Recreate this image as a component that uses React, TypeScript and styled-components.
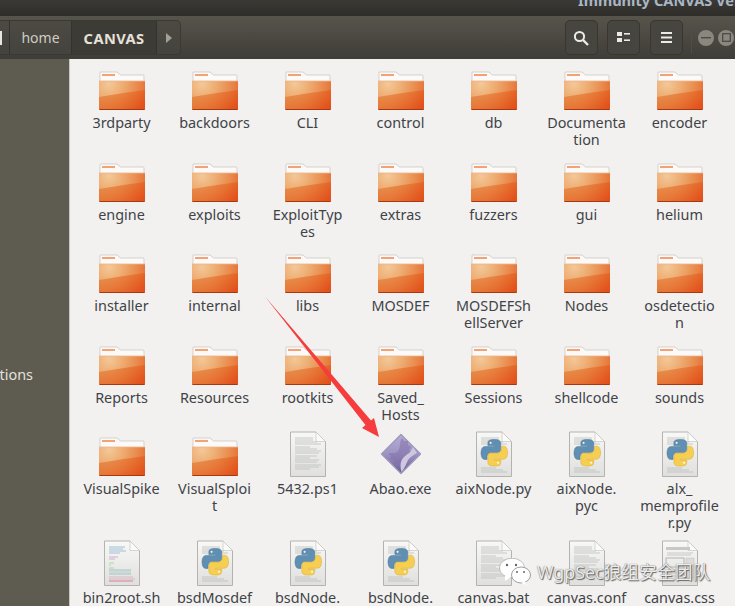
import React from "react";
import styled, { createGlobalStyle } from "styled-components";

const Global = createGlobalStyle`
  html, body { margin: 0; padding: 0; background: #f2f1ef; }
  body { font-family: "Noto Sans", "Noto Sans CJK SC", sans-serif; }
`;

const Window = styled.div`
  position: relative;
  width: 735px;
  height: 606px;
  overflow: hidden;
  display: flex;
  flex-direction: column;
`;

const TitleBar = styled.div`
  flex: none;
  height: 16px;
  background: linear-gradient(#3a3934, #2e2d29);
  display: flex;
  align-items: flex-end;
  padding: 0 0 7px 578px;
  box-sizing: border-box;
  overflow: hidden;
`;

const TitleText = styled.span`
  font-size: 14.6px;
  line-height: 17px;
  font-weight: 700;
  color: #a9b6c6;
  white-space: nowrap;
`;

const Toolbar = styled.div`
  flex: none;
  height: 43px;
  box-sizing: border-box;
  padding: 4px 0;
  background: linear-gradient(#57544c, #3f3d38);
  display: flex;
  align-items: stretch;
`;

const Crumbs = styled.div`
  display: flex;
  height: 35px;
  border: 1px solid #3b3934;
  border-left: none;
  border-radius: 0 5px 5px 0;
  background: linear-gradient(#4c4a43, #45433d);
  box-sizing: border-box;
`;

const Crumb = styled.div<{ $active?: boolean; $w: number; $edge?: boolean }>`
  width: ${(p) => p.$w}px;
  box-sizing: border-box;
  display: flex;
  align-items: center;
  justify-content: ${(p) => (p.$edge ? "flex-start" : "center")};
  font-size: ${(p) => (p.$active ? "14.6px" : "14px")};
  color: ${(p) => (p.$active ? "#e6e2d8" : "#cfccc3")};
  font-weight: ${(p) => (p.$active ? 700 : 400)};
  background: ${(p) => (p.$active ? "#3d3b36" : "transparent")};
  border-right: 1px solid #34322e;
  letter-spacing: ${(p) => (p.$active ? "0.4px" : "0")};
  &:last-child { border-right: none; }
`;

const Spacer = styled.div`
  flex: 1;
`;

const ToolButton = styled.div`
  width: 33px;
  height: 35px;
  box-sizing: border-box;
  margin-right: 9.5px;
  border: 1px solid #38362f;
  border-radius: 5px;
  background: #47453f;
  display: flex;
  align-items: center;
  justify-content: center;
`;

const Separator = styled.div`
  width: 1px;
  margin: 3px 6px 2px -1px;
  background: #4f4d46;
`;

const WinButtons = styled.div`
  display: flex;
  align-items: center;
  gap: 4px;
  width: 37px;
  overflow: hidden;
  flex: none;
`;

const WinButton = styled.div`
  flex: none;
  width: 16px;
  height: 16px;
  border-radius: 50%;
  background: #8a877f;
  display: flex;
  align-items: center;
  justify-content: center;
  svg { display: block; }
`;

const Body = styled.div`
  flex: 1;
  min-height: 0;
  display: flex;
`;

const Sidebar = styled.div`
  flex: none;
  width: 70px;
  box-sizing: border-box;
  background: #5e5b50;
  border-right: 1px solid #c9c7c0;
  padding-top: 307px;
`;

const SideItem = styled.div`
  width: 33px;
  display: flex;
  justify-content: flex-end;
  overflow: hidden;
  font-size: 14.4px;
  line-height: 18px;
  color: #e4e2da;
  white-space: nowrap;
`;

const Grid = styled.div`
  flex: 1;
  min-width: 0;
  background: #f2f1ef;
  box-sizing: border-box;
  padding: 5px 0 0 5px;
  display: grid;
  grid-template-columns: repeat(7, 93px);
  align-content: start;
`;

const Cell = styled.div`
  display: flex;
  flex-direction: column;
  align-items: center;
  padding-bottom: 7.1px;
`;

const IconBox = styled.div`
  width: 48px;
  height: 48px;
  flex: none;
  svg { display: block; }
`;

const Label = styled.div`
  margin-top: 2px;
  font-size: 14.4px;
  line-height: 17.2px;
  color: #3f4348;
  text-align: center;
  white-space: pre;
`;

const ArrowLayer = styled.svg`
  position: absolute;
  inset: 0;
  pointer-events: none;
`;

const Watermark = styled.div`
  position: absolute;
  left: 499px;
  top: 558px;
  display: flex;
  align-items: center;
  gap: 6px;
`;

const WatermarkText = styled.span`
  font-family: "Noto Sans", "Noto Sans CJK SC", sans-serif;
  font-size: 17.8px;
  line-height: 28px;
  color: rgba(255, 255, 255, 0.88);
  text-shadow: 0 0 1px #555, 1px 1px 1px rgba(60, 60, 60, 0.75);
  white-space: nowrap;
`;

const FolderIcon = () => (
  <svg width="48" height="48" viewBox="0 0 48 48">
    <defs>
      <radialGradient id="fb" gradientUnits="userSpaceOnUse" cx="11" cy="20" r="44">
        <stop offset="0" stopColor="#f3c898" />
        <stop offset="0.3" stopColor="#eeae74" />
        <stop offset="0.65" stopColor="#e98a4c" />
        <stop offset="1" stopColor="#e4602a" />
      </radialGradient>
      <linearGradient id="fs" x1="0" y1="0" x2="1" y2="0.7">
        <stop offset="0" stopColor="#e07a34" />
        <stop offset="0.55" stopColor="#e4621f" />
        <stop offset="1" stopColor="#e0430e" />
      </linearGradient>
    </defs>
    <path d="M2 8.5 Q2 8 2.5 8 H19 L22.5 11 H45.2 Q46 11 46 12 V18 H2 Z" fill="#fbfaf8" stroke="#c4c1bc" strokeWidth="0.7" />
    <rect x="4" y="10" width="13" height="2" fill="#f2a274" />
    <path d="M1 17 H47 V44.5 Q47 46 45.5 46 H2.5 Q1 46 1 44.5 Z" fill="url(#fb)" />
    <path d="M1 33 Q24 29 47 26 V44.5 Q47 46 45.5 46 H2.5 Q1 46 1 44.5 Z" fill="url(#fs)" opacity="0.6" />
    <path d="M1 17 H47" stroke="#f0b48c" strokeWidth="0.8" />
    <path d="M1.5 45.5 H46.5" stroke="#a8380f" strokeWidth="1" />
  </svg>
);

const Paper = ({ children }: { children?: React.ReactNode }) => (
  <svg width="48" height="48" viewBox="0 0 48 48">
    <defs>
      <linearGradient id="pp" x1="0" y1="0" x2="0" y2="1">
        <stop offset="0" stopColor="#f8f8f7" />
        <stop offset="1" stopColor="#dfdfdd" />
      </linearGradient>
    </defs>
    <path d="M6.5 2 H32 L41.5 11.5 V46.5 H6.5 Z" fill="url(#pp)" stroke="#b4b3b0" strokeWidth="1" />
    <path d="M32 2 V11.5 H41.5 Z" fill="#fbfbfa" stroke="#c6c5c2" strokeWidth="0.7" />
    {children}
  </svg>
);

const TextLines = ({ ys }: { ys: number[] }) => (
  <g stroke="#b7b7b4" strokeWidth="0.7">
    {ys.map((y, i) => (
      <line key={y} x1="11" y1={y} x2={i % 5 === 4 ? 26 : y < 11 ? 29 : 37 - (i % 3) * 2} y2={y} />
    ))}
  </g>
);

const DOC_LINES = [8, 10, 12, 14, 17, 19, 21, 23, 26, 28, 30, 32, 35, 37, 39];

const DocIcon = () => (
  <Paper>
    <TextLines ys={DOC_LINES} />
  </Paper>
);

const SNAKE =
  "M54.92 0C50.33 .03 45.95 .42 42.1 1.1 30.76 3.1 28.7 7.3 28.7 15.03V25.25H55.5V28.66H18.64C10.85 28.66 4.03 33.34 1.9 42.24-.56 52.44-.67 58.8 1.9 69.45 3.8 77.38 8.35 83.03 16.14 83.03H25.35V70.79C25.35 61.95 33 54.15 42.1 54.15H68.9C76.36 54.15 82.3 48 82.3 40.5V15.03C82.3 7.77 76.2 2.32 68.9 1.1 64.28 .33 59.5-.01 54.92 0Z";

const PythonIcon = () => (
  <Paper>
    <TextLines ys={[8, 10, 12, 14, 38, 40, 42]} />
    <g transform="translate(11 9.5) scale(0.24)">
      <path d={SNAKE} fill="#5f8fb3" stroke="#456f90" strokeWidth="2" />
      <circle cx="40" cy="14" r="4.5" fill="#eef3f6" />
      <g transform="rotate(180 55.4 55.4)">
        <path d={SNAKE} fill="#f6cf52" stroke="#d8a72e" strokeWidth="2" />
        <circle cx="40" cy="14" r="4.5" fill="#fff8dc" />
      </g>
    </g>
  </Paper>
);

const CODE_ROWS: [number, string, number][] = [
  [8, "#7fa9c9", 16], [10, "#7fa9c9", 14], [12, "#7fa9c9", 17], [14, "#7fa9c9", 11],
  [18, "#c58fc4", 9], [20, "#c58fc4", 6], [24, "#8fce8a", 5], [26, "#8fce8a", 2],
  [29, "#8fce8a", 5], [31, "#7fa9c9", 22], [33, "#8fce8a", 22], [35, "#7fa9c9", 22],
  [38, "#d7a8b2", 24], [40, "#d7a8b2", 26], [42, "#d2587a", 24],
];

const ScriptIcon = () => (
  <Paper>
    <g strokeWidth="0.7">
      {CODE_ROWS.map(([y, c, w]) => (
        <line key={y} x1="11" y1={y} x2={11 + w} y2={y} stroke={c} />
      ))}
    </g>
  </Paper>
);

const CssIcon = () => (
  <Paper>
    <rect x="10" y="8" width="24" height="3" fill="#c9c8c5" />
    <TextLines ys={[14, 16, 31, 34, 37, 40]} />
    <rect x="10" y="19" width="18" height="9" fill="none" stroke="#b5b4b1" />
    <rect x="30" y="19" width="8" height="20" fill="#dcdbd8" stroke="#c0bfbc" strokeWidth="0.5" />
  </Paper>
);

const ExeIcon = () => (
  <svg width="48" height="48" viewBox="0 0 48 48">
    <defs>
      <linearGradient id="dm" x1="0.5" y1="0" x2="0.5" y2="1">
        <stop offset="0" stopColor="#b5aed4" />
        <stop offset="0.5" stopColor="#9f94c4" />
        <stop offset="1" stopColor="#6c5a92" />
      </linearGradient>
    </defs>
    <path d="M24 4.5 L43.5 24 L24 43.5 L4.5 24 Z" fill="url(#dm)" stroke="#9d97ba" strokeWidth="1.3" strokeLinejoin="round" />
    <path d="M25 8 L27 11 L31 11 L31 15 L34 17 L32 20 L34 23 L31 25 L30 29 L27 32 L25 35 L21 33 L18 34 L17 30 L13 29 L14 26 L11 24 C15 22 19 24 21 21 C24 18 22 12 25 8 Z" fill="#7d6ba5" opacity="0.5" />
    <path d="M24.5 42 C23 36 23 31 27 27 C30 24 34 23 36 17 C38 20 39 21 40 23 C36 25 33 27 31 30 C29 34 28 38 24.5 42 Z" fill="#cdc8e0" />
  </svg>
);

const ICONS = {
  folder: FolderIcon,
  doc: DocIcon,
  python: PythonIcon,
  script: ScriptIcon,
  css: CssIcon,
  exe: ExeIcon,
};

type Kind = keyof typeof ICONS;

const ITEMS: [string, Kind][] = [
  ["3rdparty", "folder"], ["backdoors", "folder"], ["CLI", "folder"], ["control", "folder"], ["db", "folder"], ["Documenta\ntion", "folder"], ["encoder", "folder"],
  ["engine", "folder"], ["exploits", "folder"], ["ExploitTyp\nes", "folder"], ["extras", "folder"], ["fuzzers", "folder"], ["gui", "folder"], ["helium", "folder"],
  ["installer", "folder"], ["internal", "folder"], ["libs", "folder"], ["MOSDEF", "folder"], ["MOSDEFSh\nellServer", "folder"], ["Nodes", "folder"], ["osdetectio\nn", "folder"],
  ["Reports", "folder"], ["Resources", "folder"], ["rootkits", "folder"], ["Saved_\nHosts", "folder"], ["Sessions", "folder"], ["shellcode", "folder"], ["sounds", "folder"],
  ["VisualSpike", "folder"], ["VisualSploi\nt", "folder"], ["5432.ps1", "doc"], ["Abao.exe", "exe"], ["aixNode.py", "python"], ["aixNode.\npyc", "python"], ["alx_\nmemprofile\nr.py", "python"],
  ["bin2root.sh", "script"], ["bsdMosdef", "python"], ["bsdNode.", "python"], ["bsdNode.", "python"], ["canvas.bat", "doc"], ["canvas.conf", "doc"], ["canvas.css", "css"],
];

export default function App() {
  return (
    <Window>
      <Global />
      <TitleBar>
        <TitleText>Immunity CANVAS Version</TitleText>
      </TitleBar>
      <Toolbar>
        <Crumbs>
          <Crumb $w={10} $edge>
            <svg width="2" height="14" viewBox="0 0 2 14"><rect width="2" height="14" fill="#e8e6df" /></svg>
          </Crumb>
          <Crumb $w={62}>home</Crumb>
          <Crumb $w={85} $active>CANVAS</Crumb>
          <Crumb $w={23}>
            <svg width="6" height="10" viewBox="0 0 6 10"><path d="M0 0 L6 5 L0 10 Z" fill="#a3a097" /></svg>
          </Crumb>
        </Crumbs>
        <Spacer />
        <ToolButton>
          <svg width="16" height="16" viewBox="0 0 16 16" fill="none" stroke="#ecebe6" strokeWidth="2">
            <circle cx="6.5" cy="6.5" r="4.6" />
            <path d="M10 10 L15 15" strokeWidth="2.4" />
          </svg>
        </ToolButton>
        <ToolButton>
          <svg width="13" height="11" viewBox="0 0 13 11" fill="#ecebe6">
            <rect x="0" y="0" width="5" height="4" />
            <rect x="0" y="6" width="5" height="4" />
            <rect x="7" y="1" width="6" height="1.6" />
            <rect x="7" y="7.4" width="6" height="1.6" />
          </svg>
        </ToolButton>
        <ToolButton>
          <svg width="11" height="11" viewBox="0 0 11 11" fill="#ecebe6">
            <rect x="0" y="0" width="11" height="2" />
            <rect x="0" y="4.5" width="11" height="2" />
            <rect x="0" y="9" width="11" height="2" />
          </svg>
        </ToolButton>
        <Separator />
        <WinButtons>
          <WinButton>
            <svg width="10" height="2" viewBox="0 0 10 2"><rect width="10" height="1.4" fill="#4d4b45" /></svg>
          </WinButton>
          <WinButton>
            <svg width="9" height="9" viewBox="0 0 9 9"><rect x="0.7" y="0.7" width="7.6" height="7.6" fill="none" stroke="#4d4b45" strokeWidth="1.3" /></svg>
          </WinButton>
        </WinButtons>
      </Toolbar>
      <Body>
        <Sidebar>
          <SideItem>Other Locations</SideItem>
        </Sidebar>
        <Grid>
          {ITEMS.map(([label, kind], i) => {
            const Icon = ICONS[kind];
            return (
              <Cell key={i}>
                <IconBox><Icon /></IconBox>
                <Label>{label}</Label>
              </Cell>
            );
          })}
        </Grid>
      </Body>
      <ArrowLayer width="735" height="606" viewBox="0 0 735 606">
        <polygon points="265,296.5 371,420.5 374,418 379,437 362,428 365.5,425" fill="#f63c3c" />
      </ArrowLayer>
      <Watermark>
        <svg width="32" height="28" viewBox="0 0 32 28">
          <ellipse cx="13" cy="10" rx="12.5" ry="9.8" fill="#fff" stroke="#999" strokeWidth="0.6" />
          <path d="M6 17 L6 23 L12 19 Z" fill="#fff" />
          <ellipse cx="22" cy="17" rx="9.5" ry="8" fill="#fff" stroke="#777" strokeWidth="0.7" />
          <path d="M26 23 L27.5 27 L22 25 Z" fill="#fff" />
          <circle cx="18" cy="14" r="1" fill="#666" />
          <circle cx="25" cy="14" r="1" fill="#666" />
          <circle cx="8" cy="7" r="1.2" fill="#666" />
          <circle cx="17" cy="7" r="1.2" fill="#666" />
        </svg>
        <WatermarkText>WgpSec狼组安全团队</WatermarkText>
      </Watermark>
    </Window>
  );
}
